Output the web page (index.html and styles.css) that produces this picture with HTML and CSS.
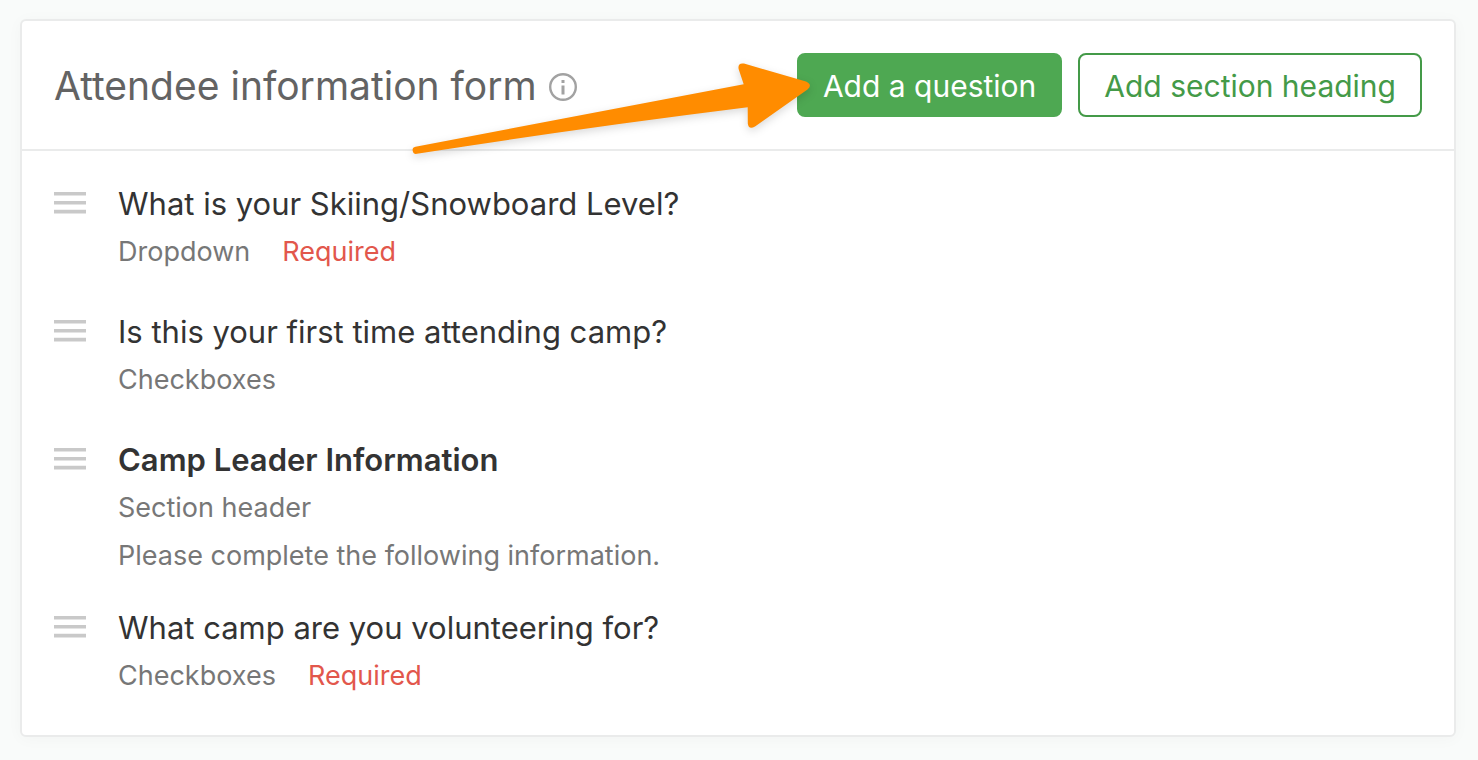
FILE: index.html
```
<!DOCTYPE html>
<html lang="en">
<head>
    <meta charset="UTF-8">
    <meta name="viewport" content="width=device-width, initial-scale=1.0">
    <title>Attendee information form</title>
    <link rel="stylesheet" href="styles.css">
</head>
<body>
    <main class="card">
        <header class="card-header">
            <h1 class="card-title">Attendee information form</h1>
            <button class="info" type="button" aria-label="More information">
                <svg width="28" height="28" viewBox="0 0 28 28" fill="none">
                    <circle cx="14" cy="14" r="12.8" stroke="#a2a2a2" stroke-width="2.4"/>
                    <path d="M14 7v3M14 12.5v9" stroke="#a2a2a2" stroke-width="3"/>
                </svg>
            </button>
            <div class="actions">
                <div class="callout">
                    <button class="btn btn-primary" type="button">Add a question</button>
                    <svg class="arrow" width="412" height="112" viewBox="0 0 412 112">
                        <path d="M10.5 93.7L338.7 31.3L333.6 16Q332.5 9.5 339 10.6L401 28.6Q408 32 402.5 36.6L350 73.6Q343.5 77 342.8 70.5L342.7 54.3Q176 75 12 100.8A3.6 3.6 0 0 1 10.5 93.7Z"/>
                    </svg>
                </div>
                <button class="btn btn-outline" type="button">Add section heading</button>
            </div>
        </header>
        <ul class="questions">
            <li class="question">
                <svg class="handle" viewBox="0 0 32 22"><path d="M0 1.8h32M0 10.7h32M0 19.6h32"/></svg>
                <div>
                    <h2 class="question-title">What is your Skiing/Snowboard Level?</h2>
                    <p class="meta"><span>Dropdown</span><span class="required">Required</span></p>
                </div>
            </li>
            <li class="question">
                <svg class="handle" viewBox="0 0 32 22"><path d="M0 1.8h32M0 10.7h32M0 19.6h32"/></svg>
                <div>
                    <h2 class="question-title">Is this your first time attending camp?</h2>
                    <p class="meta"><span>Checkboxes</span></p>
                </div>
            </li>
            <li class="question">
                <svg class="handle" viewBox="0 0 32 22"><path d="M0 1.8h32M0 10.7h32M0 19.6h32"/></svg>
                <div>
                    <h2 class="question-title section-title">Camp Leader Information</h2>
                    <p class="meta"><span>Section header</span></p>
                    <p class="description">Please complete the following information.</p>
                </div>
            </li>
            <li class="question">
                <svg class="handle" viewBox="0 0 32 22"><path d="M0 1.8h32M0 10.7h32M0 19.6h32"/></svg>
                <div>
                    <h2 class="question-title">What camp are you volunteering for?</h2>
                    <p class="meta"><span>Checkboxes</span><span class="required">Required</span></p>
                </div>
            </li>
        </ul>
    </main>
</body>
</html>
```
FILE: styles.css
```
* {
    box-sizing: border-box;
}
body {
    margin: 0;
    padding: 19px 22px 23px 20px;
    background-color: #f9fbfa;
    font-family: Inter, "Liberation Sans", sans-serif;
    color: #333;
}
h1, h2, p, ul {
    margin: 0;
    padding: 0;
    font-weight: 400;
}
.card {
    background-color: white;
    border: 2px solid #eaebeb;
    border-radius: 6px;
    box-shadow: 0 2px 16px rgba(0, 0, 0, 0.03);
}
.card-header {
    display: flex;
    align-items: center;
    padding: 32px;
    border-bottom: 2px solid #eaebeb;
}
.card-title {
    padding-top: 2px;
    font-size: 39px;
    line-height: 48px;
    color: #636363;
}
.info {
    display: flex;
    margin-left: 12px;
    padding: 4px 0 0;
    border: none;
    background: none;
    cursor: pointer;
}
.actions {
    display: flex;
    gap: 16px;
    margin-left: auto;
}
.callout {
    position: relative;
}
.btn {
    height: 64px;
    padding: 2px 24px 0;
    border: 2px solid #4ea852;
    border-radius: 8px;
    font-family: inherit;
    font-size: 30px;
    white-space: nowrap;
    cursor: pointer;
}
.btn-primary {
    background-color: #4ea852;
    color: white;
}
.btn-outline {
    background-color: white;
    border-color: #449a48;
    color: #449a48;
}
.arrow {
    position: absolute;
    top: 0;
    right: calc(100% - 20px);
    fill: #ff8c00;
    filter: drop-shadow(0 3px 4px rgba(0, 0, 0, 0.15));
    pointer-events: none;
}
.questions {
    display: flex;
    flex-direction: column;
    gap: 36px;
    padding: 29px 32px 39px;
    list-style: none;
}
.question {
    display: flex;
    gap: 32px;
}
.handle {
    flex: none;
    width: 32px;
    height: 22px;
    margin-top: 12px;
    stroke: #c9c9c9;
    stroke-width: 3.6;
    cursor: move;
}
.question-title {
    font-size: 31px;
    line-height: 48px;
}
.section-title {
    font-weight: 600;
}
.meta {
    display: flex;
    gap: 32px;
    margin-top: 4px;
    font-size: 27px;
    line-height: 40px;
    color: #777;
}
.required {
    color: #e2574c;
}
.description {
    margin-top: 16px;
    font-size: 27px;
    line-height: 24px;
    color: #777;
}
```
